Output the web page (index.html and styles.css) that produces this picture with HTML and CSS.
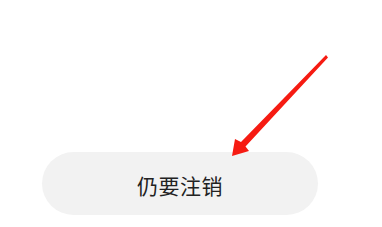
FILE: index.html
```html
<!DOCTYPE html>
<html lang="zh-CN">
<head>
<meta charset="utf-8" />
<title>仍要注销</title>
<link rel="stylesheet" href="styles.css">
</head>
<body>
<div id="wrap">
	<div class="btn_area">
		<button type="button" class="btn_cancel">仍要注销</button>
	</div>
	<!-- 안내 화살표 -->
	<svg class="arrow" width="382" height="227" viewBox="0 0 382 227">
		<polygon fill="#f61b12" points="326,55 328,57.5 245.5,146.5 249,151 232,156 235,139 241,142" />
	</svg>
</div>
</body>
</html>
```
FILE: styles.css
```css
	*{margin:0; padding:0;}
	html, body{background:#fff;}
	#wrap{
		position:relative;
		width:382px;
		height:227px;
		overflow:hidden;
		font-family:"Noto Sans CJK SC", "Noto Sans", sans-serif;
	}
	.btn_area{padding:152px 0 0 42px;}
	.btn_cancel{
		display:block;
		width:276px;
		height:63px;
		border:0;
		border-radius:32px;
		background:#f2f2f2;
		color:#222;
		font-family:inherit;
		font-size:21px;
		line-height:63px;
		padding-top:2px;
		text-align:center;
		letter-spacing:0.5px;
	}
	.arrow{position:absolute; left:0; top:0;}
```
